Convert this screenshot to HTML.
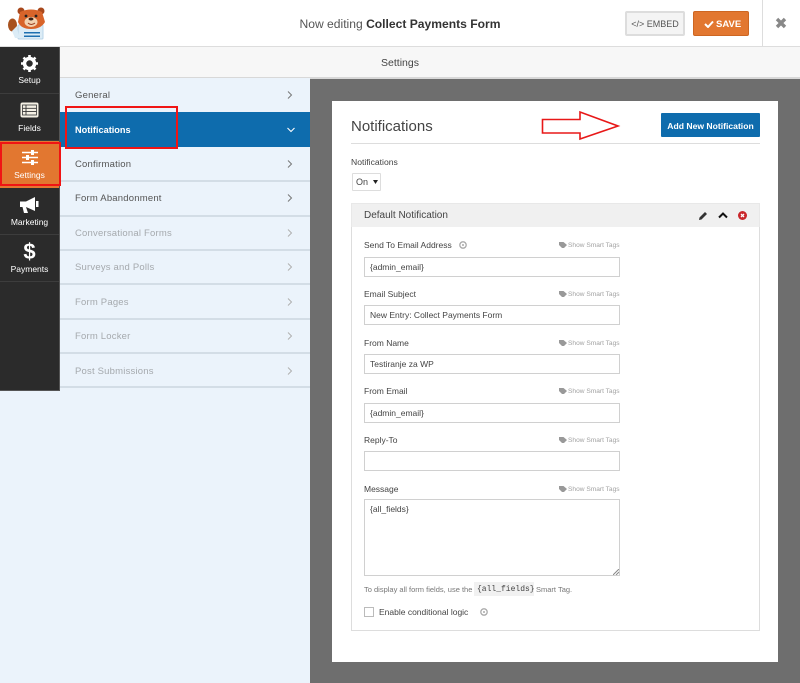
<!DOCTYPE html>
<html><head><meta charset="utf-8"><style>
html,body{margin:0;padding:0}
body{width:800px;height:683px;overflow:hidden;position:relative;background:#fff;font-family:"Liberation Sans",sans-serif;color:#444}
div,span,svg{position:absolute;box-sizing:border-box}
.t{white-space:nowrap;line-height:14px}
.nav{left:0;width:59px;height:47px;border-bottom:1px solid #3d3d3d;background:#2b2b2b}
.nl{left:0;width:59px;text-align:center;color:#fff;font-size:8.5px;line-height:12px;top:28px}
.m{left:59px;width:251px;height:34px;background:#ebf3fb}
.ln{left:59px;width:251px;height:2px;background:#d3dde6}
.ml{left:16px;top:11px;font-size:9.500px;letter-spacing:.2px;color:#555;white-space:nowrap;line-height:14px}
.off{color:#a5a9ad}
.ch{left:228px;top:12px}
.lab{left:364px;font-size:8.500px;color:#444;white-space:nowrap;line-height:12px}
.sst{left:568px;font-size:6.600px;color:#a2a2a2;white-space:nowrap;line-height:10px}
.inp{left:364px;width:256px;height:20px;border:1px solid #d0d0d0;background:#fff;font-size:8.500px;color:#444;padding:3px 5px;line-height:13px;white-space:nowrap}
</style></head><body>

<div style="left:0;top:46px;width:800px;height:1px;background:#ddd"></div>
<svg style="left:6px;top:6px" width="40" height="35" viewBox="0 0 40 35">
<rect x="12" y="19" width="25" height="14" rx="1" fill="#dcecf6" stroke="#b8d4e8"/>
<rect x="18" y="26" width="16" height="1.500" fill="#1d6fb0"/><rect x="18" y="29.500" width="16" height="1.500" fill="#1d6fb0"/>
<circle cx="15" cy="5" r="3.500" fill="#a8481c"/><circle cx="35" cy="5" r="3.500" fill="#a8481c"/>
<path d="M14 6Q25 1 36 6L39 16Q35 23 25 23Q15 23 12 16Z" fill="#d8642a"/>
<ellipse cx="25" cy="16" rx="6.500" ry="5" fill="#f3d2b0"/>
<circle cx="20" cy="10" r="1.400" fill="#222"/><circle cx="30" cy="10" r="1.400" fill="#222"/>
<ellipse cx="25" cy="13" rx="2.500" ry="1.500" fill="#3b2116"/>
<path d="M22 17Q25 20 29 17" fill="none" stroke="#9a3a1a"/>
<ellipse cx="6.500" cy="19" rx="4.500" ry="6.500" fill="#a8521f"/>
<path d="M6 25L11 20L13 32L9 32Z" fill="#dcecf6"/>
</svg>
<div class="t" style="left:0;top:17px;width:800px;text-align:center;font-size:12.100px;color:#555;line-height:14px;">Now editing <b style="color:#333">Collect Payments Form</b></div>
<div style="left:625px;top:11px;width:60px;height:25px;background:#f4f4f4;border:2px solid #ddd;border-radius:2px"></div>
<div class="t" style="left:625px;top:17px;width:60px;text-align:center;font-size:9px;color:#555">&lt;/&gt; EMBED</div>
<div style="left:693px;top:11px;width:56px;height:25px;background:#e27730;border:1px solid #cd6622;border-radius:2px"></div>
<svg style="left:704px;top:20px" width="10" height="8" viewBox="0 0 10 8"><path d="M1 4L4 7L9 1.500" fill="none" stroke="#fff" stroke-width="2"/></svg>
<div class="t" style="left:716px;top:18px;font-size:9.500px;font-weight:bold;color:#fff">SAVE</div>
<div style="left:762px;top:0;width:1px;height:46px;background:#ddd"></div>
<svg style="left:775px;top:17px" width="12" height="12" viewBox="0 0 12 12"><path d="M2 2L10 10M10 2L2 10" stroke="#888" stroke-width="3.400"/></svg>

<div style="left:59px;top:47px;width:741px;height:32px;background:#f7f7f7;border-bottom:2px solid #d8d8d8"></div>
<div class="t" style="left:59px;top:56px;width:682px;text-align:center;font-size:10.500px;color:#444">Settings</div>

<div style="left:0;top:79px;width:310px;height:604px;background:#ebf3fb"></div>
<div style="left:310px;top:79px;width:490px;height:604px;background:#6e6e6e"></div>
<div style="left:332px;top:101px;width:446px;height:561px;background:#fff"></div>

<div class="m" style="top:78px"><span class="ml">General</span><svg class="ch" style="top:13px" width="6" height="8"><path d="M1 .5L4.500 4L1 7.500" fill="none" stroke="#777" stroke-width="1"/></svg></div>
<div class="m" style="top:112px;height:35px;background:#0e6cad"><span class="ml" style="top:11px;color:#fff;font-weight:bold;font-size:9.200px;letter-spacing:0">Notifications</span><svg class="ch" style="top:15px" width="8" height="6"><path d="M.5 1L4 4.500L7.500 1" fill="none" stroke="#fff" stroke-width="1.100"/></svg></div>
<div class="m" style="top:147px"><span class="ml">Confirmation</span><svg class="ch" style="top:13px" width="6" height="8"><path d="M1 .5L4.500 4L1 7.500" fill="none" stroke="#777" stroke-width="1"/></svg></div>
<div class="m" style="top:181px"><span class="ml">Form Abandonment</span><svg class="ch" style="top:13px" width="6" height="8"><path d="M1 .5L4.500 4L1 7.500" fill="none" stroke="#777" stroke-width="1"/></svg></div>
<div class="m" style="top:216px"><span class="ml off">Conversational Forms</span><svg class="ch" style="top:13px" width="6" height="8"><path d="M1 .5L4.500 4L1 7.500" fill="none" stroke="#b0b0b0" stroke-width="1"/></svg></div>
<div class="m" style="top:250px"><span class="ml off">Surveys and Polls</span><svg class="ch" style="top:13px" width="6" height="8"><path d="M1 .5L4.500 4L1 7.500" fill="none" stroke="#b0b0b0" stroke-width="1"/></svg></div>
<div class="m" style="top:285px"><span class="ml off">Form Pages</span><svg class="ch" style="top:13px" width="6" height="8"><path d="M1 .5L4.500 4L1 7.500" fill="none" stroke="#b0b0b0" stroke-width="1"/></svg></div>
<div class="m" style="top:319px"><span class="ml off">Form Locker</span><svg class="ch" style="top:13px" width="6" height="8"><path d="M1 .5L4.500 4L1 7.500" fill="none" stroke="#b0b0b0" stroke-width="1"/></svg></div>
<div class="m" style="top:354px"><span class="ml off">Post Submissions</span><svg class="ch" style="top:13px" width="6" height="8"><path d="M1 .5L4.500 4L1 7.500" fill="none" stroke="#b0b0b0" stroke-width="1"/></svg></div>
<div class="ln" style="top:180px"></div><div class="ln" style="top:215px"></div><div class="ln" style="top:249px"></div><div class="ln" style="top:283px"></div><div class="ln" style="top:318px"></div><div class="ln" style="top:352px"></div><div class="ln" style="top:386px"></div>

<div style="left:0;top:47px;width:60px;height:344px;background:#2b2b2b;border-right:1px solid #555;border-bottom:1px solid #555"></div>
<div class="nav" style="top:47px"><svg style="left:21px;top:8px" width="17" height="17" viewBox="0 0 17 17"><circle cx="8.500" cy="8.500" r="5" fill="none" stroke="#fff" stroke-width="3.500"/><path d="M8.500 0V17M0 8.500H17M2.500 2.500L14.500 14.500M14.500 2.500L2.500 14.500" stroke="#fff" stroke-width="2.600" stroke-dasharray="3 11"/></svg><span class="nl" style="top:27px">Setup</span></div>
<div class="nav" style="top:94px"><svg style="left:20px;top:8px" width="19" height="16" viewBox="0 0 19 16"><rect x=".5" y=".5" width="18" height="15" rx="2" fill="#f4f0e4"/><rect x="2.500" y="3" width="14" height="10" fill="#f4f0e4" stroke="#333" stroke-width=".8"/><path d="M2.500 6.300H16.500M2.500 9.600H16.500M6 3V13" stroke="#333" stroke-width=".9"/></svg><span class="nl">Fields</span></div>
<div class="nav" style="top:141px;height:47px;background:#e27730;border:0"><svg style="left:22px;top:9px" width="16" height="15" viewBox="0 0 16 15"><path d="M0 2.500H16M0 7.500H16M0 12.500H16" stroke="#fff" stroke-width="1.400"/><rect x="9" y="0" width="3" height="5" fill="#fff"/><rect x="4" y="5" width="3" height="5" fill="#fff"/><rect x="9" y="10" width="3" height="5" fill="#fff"/></svg><span class="nl" style="top:28px">Settings</span></div>
<div class="nav" style="top:188px"><svg style="left:20px;top:9px" width="19" height="17" viewBox="0 0 19 17"><path d="M0 4.500H6L15 0V14L6 10L8 16H4L2.500 10H0Z" fill="#fff"/><rect x="16" y="4" width="2.500" height="6" fill="#fff"/></svg><span class="nl" style="top:28px">Marketing</span></div>
<div class="nav" style="top:235px"><span class="t" style="left:0;width:59px;text-align:center;top:6px;font-size:22px;line-height:22px;font-weight:bold;color:#fff">$</span><span class="nl" style="top:28px">Payments</span></div>

<div class="t" style="left:351px;top:119px;font-size:15px;line-height:16px;color:#444">Notifications</div>
<div style="left:661px;top:113px;width:99px;height:24px;background:#0e6cad;border-radius:1px"></div>
<div class="t" style="left:661px;top:120px;width:99px;text-align:center;font-size:8.600px;line-height:13px;font-weight:bold;color:#fff">Add New Notification</div>
<div style="left:351px;top:143px;width:409px;height:1px;background:#ddd"></div>

<div class="lab" style="left:351px;top:156px;font-size:8.600px">Notifications</div>
<div style="left:352px;top:173px;width:29px;height:18px;border:1px solid #ddd;border-radius:1px;background:#fff"></div>
<div class="t" style="left:356px;top:176px;font-size:9px;line-height:13px">On</div>
<svg style="left:373px;top:180px" width="5" height="4"><path d="M0 0H5L2.500 4Z" fill="#222"/></svg>

<div style="left:351px;top:203px;width:409px;height:428px;border:1px solid #ddd;background:#fff"></div>
<div style="left:351px;top:203px;width:409px;height:24px;background:#f0f0f0;border:1px solid #e8e8e8;border-bottom:0"></div>
<div class="t" style="left:364px;top:209px;font-size:10px;color:#444">Default Notification</div>
<svg style="left:699px;top:211px" width="9" height="9" viewBox="0 0 9 9"><path d="M0 9L.5 6.500L6 1L8 3L2.500 8.500Z" fill="#333"/></svg>
<svg style="left:718px;top:212px" width="10" height="7" viewBox="0 0 10 7"><path d="M1 5.500L5 1.500L9 5.500" fill="none" stroke="#111" stroke-width="2"/></svg>
<svg style="left:738px;top:211px" width="9" height="9" viewBox="0 0 9 9"><circle cx="4.500" cy="4.500" r="4.500" fill="#c9272b"/><path d="M3 3L6 6M6 3L3 6" stroke="#fff" stroke-width="1.300"/></svg>

<div class="lab" style="top:239px">Send To Email Address</div>
<svg style="left:459px;top:241px" width="8" height="8"><circle cx="4" cy="4" r="3.200" fill="none" stroke="#aaa" stroke-width="1.300"/><circle cx="4" cy="4" r="1" fill="#aaa"/></svg>
<svg style="left:559px;top:242px" width="8" height="6"><path d="M0 0H4.500L8 3L5 6H3L0 3Z" fill="#999"/></svg><div class="sst" style="top:241px">Show Smart Tags</div>
<div class="inp" style="top:257px">{admin_email}</div>

<div class="lab" style="top:288px">Email Subject</div>
<svg style="left:559px;top:291px" width="8" height="6"><path d="M0 0H4.500L8 3L5 6H3L0 3Z" fill="#999"/></svg><div class="sst" style="top:290px">Show Smart Tags</div>
<div class="inp" style="top:305px">New Entry: Collect Payments Form</div>

<div class="lab" style="top:337px">From Name</div>
<svg style="left:559px;top:340px" width="8" height="6"><path d="M0 0H4.500L8 3L5 6H3L0 3Z" fill="#999"/></svg><div class="sst" style="top:339px">Show Smart Tags</div>
<div class="inp" style="top:354px">Testiranje za WP</div>

<div class="lab" style="top:385px">From Email</div>
<svg style="left:559px;top:388px" width="8" height="6"><path d="M0 0H4.500L8 3L5 6H3L0 3Z" fill="#999"/></svg><div class="sst" style="top:387px">Show Smart Tags</div>
<div class="inp" style="top:403px">{admin_email}</div>

<div class="lab" style="top:434px">Reply-To</div>
<svg style="left:559px;top:437px" width="8" height="6"><path d="M0 0H4.500L8 3L5 6H3L0 3Z" fill="#999"/></svg><div class="sst" style="top:436px">Show Smart Tags</div>
<div class="inp" style="top:451px"></div>

<div class="lab" style="top:483px">Message</div>
<svg style="left:559px;top:486px" width="8" height="6"><path d="M0 0H4.500L8 3L5 6H3L0 3Z" fill="#999"/></svg><div class="sst" style="top:485px">Show Smart Tags</div>
<div class="inp" style="top:499px;height:77px">{all_fields}</div>
<svg style="left:613px;top:569px" width="6" height="6"><path d="M0 6L6 0M3 6L6 3" stroke="#888"/></svg>

<div class="t" style="left:364px;top:583px;font-size:7.500px;color:#777">To display all form fields, use the</div>
<div style="left:474px;top:582px;width:60px;height:14px;background:#f1f1f1"></div>
<div class="t" style="left:477px;top:583px;font-family:'Liberation Mono',monospace;font-size:8px;color:#444">{all_fields}</div>
<div class="t" style="left:536px;top:583px;font-size:7.500px;color:#777">Smart Tag.</div>

<div style="left:364px;top:607px;width:10px;height:10px;border:1px solid #bbb;background:#fff"></div>
<div class="t" style="left:379px;top:605px;font-size:8.500px;color:#444">Enable conditional logic</div>
<svg style="left:480px;top:608px" width="8" height="8"><circle cx="4" cy="4" r="3.200" fill="none" stroke="#aaa" stroke-width="1.300"/><circle cx="4" cy="4" r="1" fill="#aaa"/></svg>

<div style="left:65px;top:106px;width:113px;height:43px;border:2px solid #f01414"></div>
<div style="left:0;top:142px;width:61px;height:44px;border:2px solid #f01414"></div>
<svg style="left:0;top:0" width="800" height="683" viewBox="0 0 800 683"><path d="M542.500 119.500H580V112L618 126L580 139V133H542.500Z" fill="#fff" stroke="#e81818" stroke-width="1.600"/></svg>
</body></html>
